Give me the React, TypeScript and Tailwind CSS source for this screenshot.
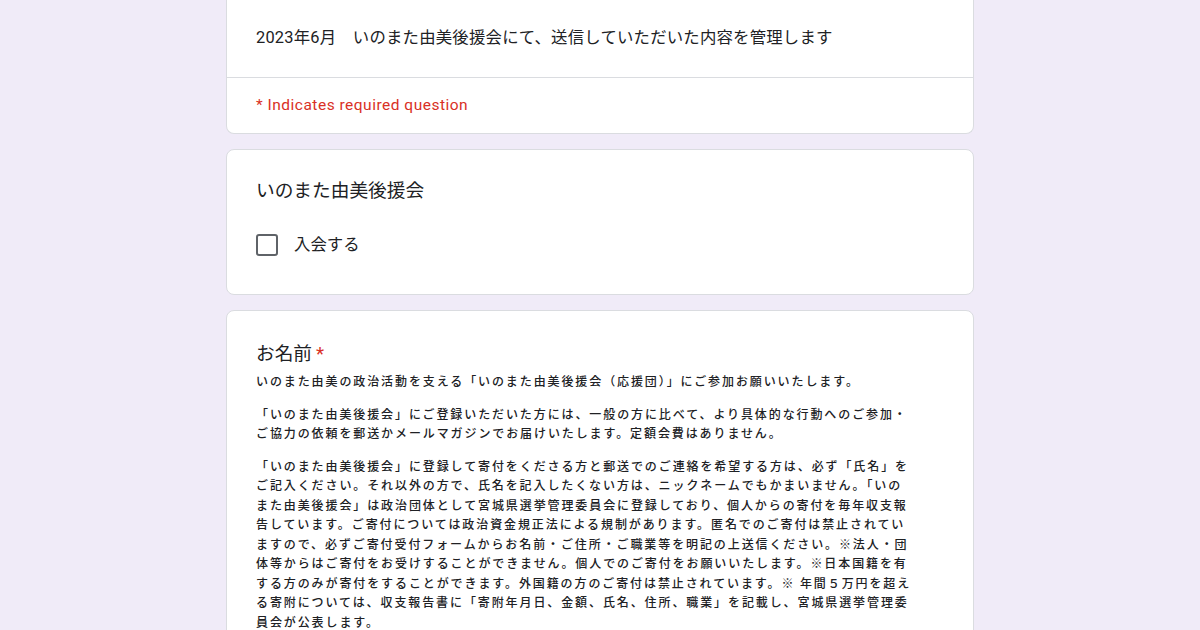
const font = "font-['Roboto','Noto_Sans_CJK_JP',sans-serif]"

const para3 = [
  '「いのまた由美後援会」に登録して寄付をくださる方と郵送でのご連絡を希望する方は、必ず「氏名」を',
  'ご記入ください。それ以外の方で、氏名を記入したくない方は、ニックネームでもかまいません。「いの',
  'また由美後援会」は政治団体として宮城県選挙管理委員会に登録しており、個人からの寄付を毎年収支報',
  '告しています。ご寄付については政治資金規正法による規制があります。匿名でのご寄付は禁止されてい',
  'ますので、必ずご寄付受付フォームからお名前・ご住所・ご職業等を明記の上送信ください。※法人・団',
  '体等からはご寄付をお受けすることができません。個人でのご寄付をお願いいたします。※日本国籍を有',
  'する方のみが寄付をすることができます。外国籍の方のご寄付は禁止されています。※ 年間５万円を超え',
  'る寄附については、収支報告書に「寄附年月日、金額、氏名、住所、職業」を記載し、宮城県選挙管理委',
  '員会が公表します。',
]

const para2 = [
  '「いのまた由美後援会」にご登録いただいた方には、一般の方に比べて、より具体的な行動へのご参加・',
  'ご協力の依頼を郵送かメールマガジンでお届けいたします。定額会費はありません。',
]

const Lines = ({ lines }: { lines: string[] }) => (
  <p className="whitespace-nowrap">
    {lines.map((l, i) => (
      <span key={i} className="block">{l}</span>
    ))}
  </p>
)

export default function App() {
  return (
    <div className={`min-h-[630px] bg-[#f0ebf8] ${font} text-[#202124]`}>
      <div className="mx-auto flex w-[748px] flex-col gap-[15px]">
        {/* ヘッダーカード */}
        <div className="rounded-b-lg border border-t-0 border-[#dadce0] bg-white">
          <div className="px-[29px] pt-[26px] pb-[27px] text-[16.4px] leading-6 tracking-[0.2px]">
            2023年6月　いのまた由美後援会にて、送信していただいた内容を管理します
          </div>
          <div className="border-t border-[#dadce0] px-[29px] pt-[15px] pb-4 text-[15.5px] leading-6 tracking-[0.5px] text-[#d93025]">
            * Indicates required question
          </div>
        </div>

        {/* 入会 */}
        <div className="rounded-lg border border-[#dadce0] bg-white px-[29px] pt-[27px] pb-[37px]">
          <h2 className="text-[18.7px] leading-7">いのまた由美後援会</h2>
          <label className="mt-[28px] flex items-center gap-[16px]">
            <span className="h-[22px] w-[22px] rounded-[3px] border-2 border-[#5f6368]" />
            <span className="text-[16.4px] leading-6">入会する</span>
          </label>
        </div>

        {/* お名前 */}
        <div className="rounded-lg border border-[#dadce0] bg-white px-[29px] pt-[29px] pb-10">
          <h2 className="text-[18.7px] leading-7">
            お名前<span className="ml-1 text-[#d93025]">*</span>
          </h2>
          <div className="mt-[3px] flex flex-col gap-[13px] text-[12px] leading-[19.5px] tracking-[1.9px] font-medium font-['Noto_Sans_CJK_JP',sans-serif]">
            <p>いのまた由美の政治活動を支える「いのまた由美後援会（応援団）」にご参加お願いいたします。</p>
            <Lines lines={para2} />
            <Lines lines={para3} />
          </div>
        </div>
      </div>
    </div>
  )
}
